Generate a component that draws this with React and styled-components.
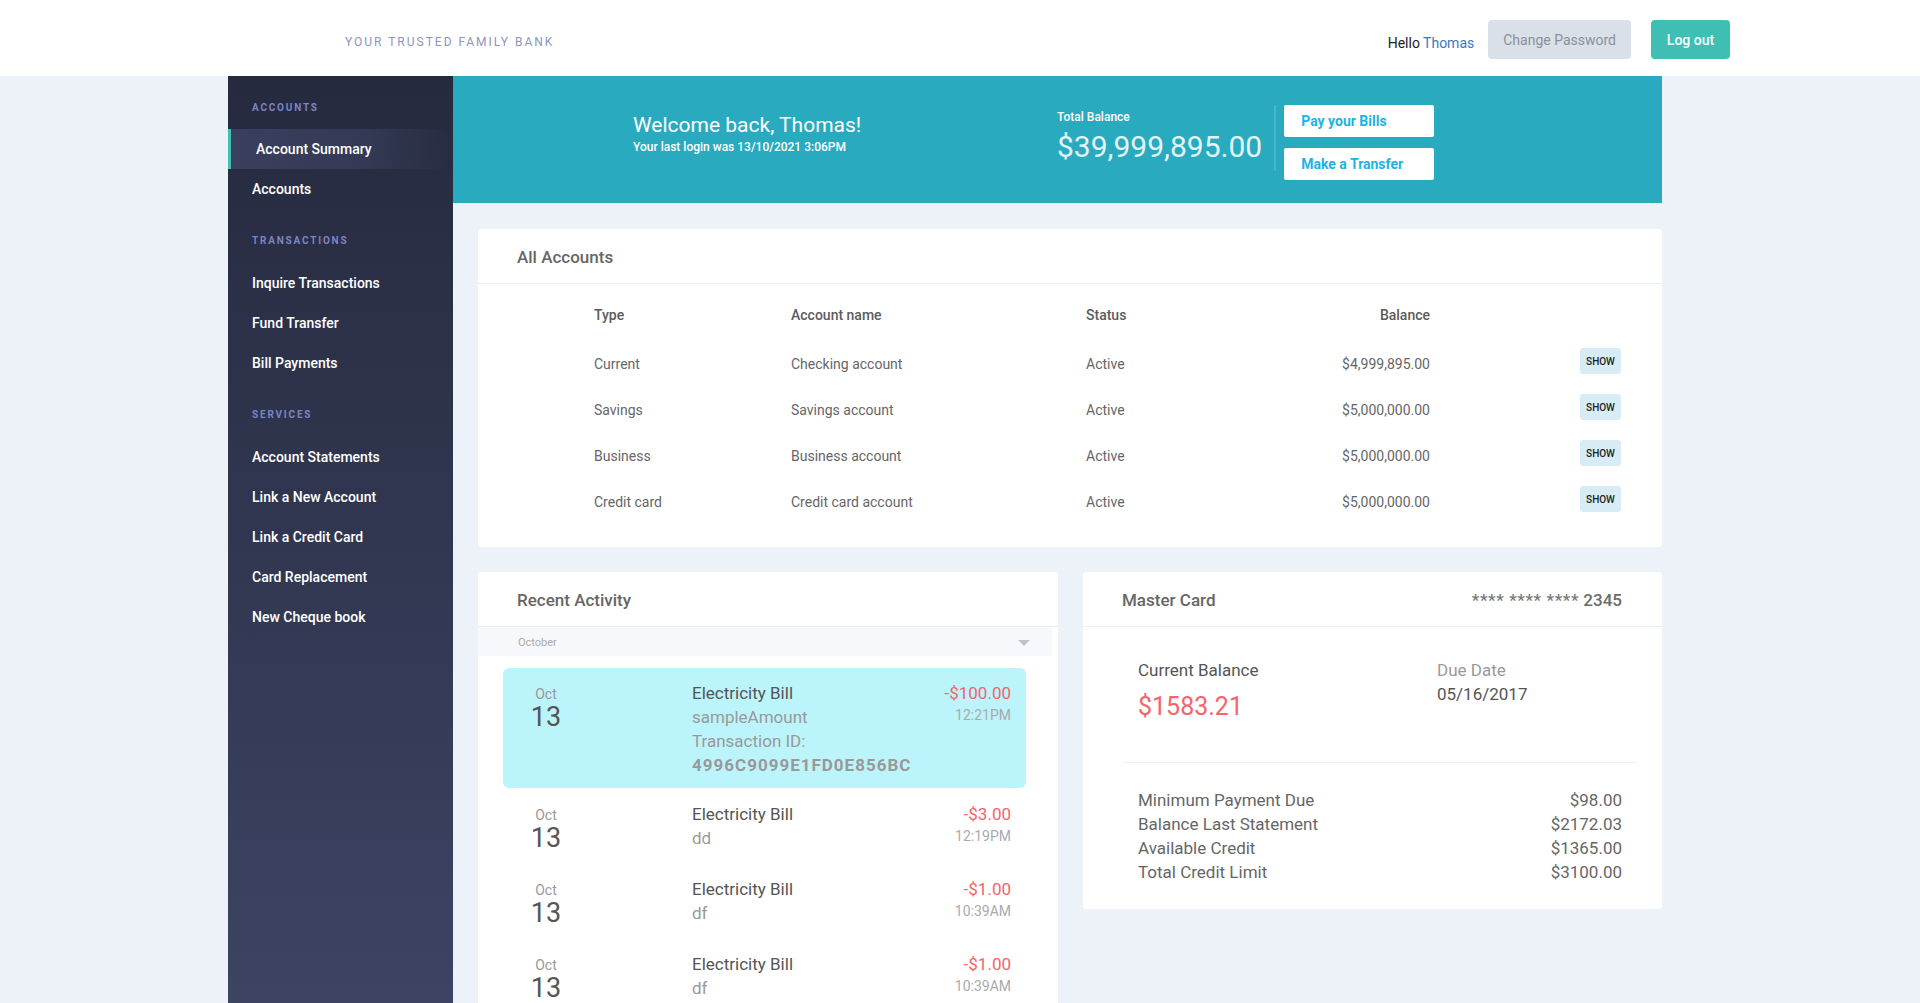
import React from "react";
import styled, { createGlobalStyle } from "styled-components";

const accounts = [
    { type: "Current", name: "Checking account", status: "Active", balance: "$4,999,895.00" },
    { type: "Savings", name: "Savings account", status: "Active", balance: "$5,000,000.00" },
    { type: "Business", name: "Business account", status: "Active", balance: "$5,000,000.00" },
    { type: "Credit card", name: "Credit card account", status: "Active", balance: "$5,000,000.00" },
];

const activity = [
    { title: "Electricity Bill", desc: "sampleAmount", txId: "4996C9099E1FD0E856BC", amount: "-$100.00", time: "12:21PM", active: true },
    { title: "Electricity Bill", desc: "dd", amount: "-$3.00", time: "12:19PM" },
    { title: "Electricity Bill", desc: "df", amount: "-$1.00", time: "10:39AM" },
    { title: "Electricity Bill", desc: "df", amount: "-$1.00", time: "10:39AM" },
    { title: "Electricity Bill", desc: "test", amount: "-$5.00", time: "9:12AM" },
];

const cardRows = [
    ["Minimum Payment Due", "$98.00"],
    ["Balance Last Statement", "$2172.03"],
    ["Available Credit", "$1365.00"],
    ["Total Credit Limit", "$3100.00"],
];

const menu = [
    { label: "ACCOUNTS", items: ["Account Summary", "Accounts"] },
    { label: "TRANSACTIONS", items: ["Inquire Transactions", "Fund Transfer", "Bill Payments"] },
    { label: "SERVICES", items: ["Account Statements", "Link a New Account", "Link a Credit Card", "Card Replacement", "New Cheque book"] },
];

function App() {
    return (
        <>
            <GlobalStyle />
            <TopBar>
                <Tagline>YOUR TRUSTED FAMILY BANK</Tagline>
                <UserArea>
                    <Hello>Hello <UserName>Thomas</UserName></Hello>
                    <GreyButton>Change Password</GreyButton>
                    <TealButton>Log out</TealButton>
                </UserArea>
            </TopBar>
            <Layout>
                <Sidebar>
                    {menu.map((section) => (
                        <NavSection key={section.label}>
                            <SectionLabel>{section.label}</SectionLabel>
                            {section.items.map((item) => (
                                <NavItem key={item} $active={item === "Account Summary"}>{item}</NavItem>
                            ))}
                        </NavSection>
                    ))}
                </Sidebar>
                <Main>
                    <Banner>
                        <Welcome>
                            <WelcomeTitle>Welcome back, Thomas!</WelcomeTitle>
                            <LastLogin>Your last login was 13/10/2021 3:06PM</LastLogin>
                        </Welcome>
                        <BalanceBlock>
                            <BalanceLabel>Total Balance</BalanceLabel>
                            <BalanceAmount>$39,999,895.00</BalanceAmount>
                        </BalanceBlock>
                        <BannerDivider />
                        <BannerActions>
                            <WhiteButton>Pay your Bills</WhiteButton>
                            <WhiteButton>Make a Transfer</WhiteButton>
                        </BannerActions>
                    </Banner>

                    <Cards>
                        <Card>
                            <CardHeader>
                                <CardTitle>All Accounts</CardTitle>
                            </CardHeader>
                            <Table>
                                <HeadCell>Type</HeadCell>
                                <HeadCell>Account name</HeadCell>
                                <HeadCell>Status</HeadCell>
                                <HeadCell $right>Balance</HeadCell>
                                <HeadCell />
                                {accounts.map((a) => (
                                    <React.Fragment key={a.type}>
                                        <Cell>{a.type}</Cell>
                                        <Cell>{a.name}</Cell>
                                        <Cell>{a.status}</Cell>
                                        <Cell $right>{a.balance}</Cell>
                                        <Cell $right><ShowButton>SHOW</ShowButton></Cell>
                                    </React.Fragment>
                                ))}
                            </Table>
                        </Card>

                        <BottomRow>
                            <Card>
                                <CardHeader>
                                    <CardTitle>Recent Activity</CardTitle>
                                </CardHeader>
                                <MonthBar>
                                    <MonthLabel>October</MonthLabel>
                                    <Caret />
                                </MonthBar>
                                <ActivityList>
                                    {activity.map((t, i) => (
                                        <ActivityItem key={i} $active={t.active}>
                                            <DateCol>
                                                <Month>Oct</Month>
                                                <Day>13</Day>
                                            </DateCol>
                                            <InfoCol>
                                                <TxTitle>{t.title}</TxTitle>
                                                <TxLine>{t.desc}</TxLine>
                                                {t.txId && <TxLine>Transaction ID:</TxLine>}
                                                {t.txId && <TxId>{t.txId}</TxId>}
                                            </InfoCol>
                                            <AmountCol>
                                                <Amount>{t.amount}</Amount>
                                                <Time>{t.time}</Time>
                                            </AmountCol>
                                        </ActivityItem>
                                    ))}
                                </ActivityList>
                            </Card>

                            <CardAuto>
                                <CardHeader>
                                    <CardTitle>Master Card</CardTitle>
                                    <CardNumber><Masked>**** **** ****</Masked> 2345</CardNumber>
                                </CardHeader>
                                <CardSummary>
                                    <div>
                                        <SummaryLabel>Current Balance</SummaryLabel>
                                        <RedAmount>$1583.21</RedAmount>
                                    </div>
                                    <div>
                                        <SummaryLabel $muted>Due Date</SummaryLabel>
                                        <SummaryLabel>05/16/2017</SummaryLabel>
                                    </div>
                                </CardSummary>
                                <CardDetails>
                                    {cardRows.map(([label, value]) => (
                                        <DetailRow key={label}>
                                            <span>{label}</span>
                                            <span>{value}</span>
                                        </DetailRow>
                                    ))}
                                </CardDetails>
                            </CardAuto>
                        </BottomRow>
                    </Cards>
                </Main>
            </Layout>
        </>
    );
}

const GlobalStyle = createGlobalStyle`
    body {
        margin: 0;
        background: #edf1f8;
        font-family: Roboto, "Liberation Sans", sans-serif;
    }
    * { box-sizing: border-box; }
`;

const TopBar = styled.header`
    height: 76px;
    background: #fff;
    display: flex;
    align-items: center;
    justify-content: space-between;
    padding: 0 190px 0 345px;
`;

const Tagline = styled.div`
    font-size: 12px;
    letter-spacing: 2px;
    color: #8a94c2;
    margin-top: 8px;
`;

const UserArea = styled.div`
    display: flex;
    align-items: center;
    margin-top: 3px;
`;

const Hello = styled.span`
    font-size: 14px;
    color: #222;
    margin-right: 14px;
    margin-top: 6px;
`;

const UserName = styled.span`
    color: #3a78bf;
`;

const GreyButton = styled.button`
    height: 39px;
    padding: 0 15px;
    border: none;
    border-radius: 4px;
    background: #dae0e8;
    color: #8a9099;
    font-family: inherit;
    font-size: 14px;
    margin-right: 20px;
`;

const TealButton = styled(GreyButton)`
    background: #3fbeb4;
    color: #fff;
    font-weight: 500;
    margin-right: 0;
    width: 79px;
`;

const Layout = styled.div`
    display: flex;
    padding-left: 228px;
    min-height: calc(100vh - 76px);
`;

const Sidebar = styled.nav`
    width: 225px;
    flex-shrink: 0;
    padding-top: 0.1px;
    background: linear-gradient(180deg, #252a3f 0px, #3d4462 930px);
`;

const SectionLabel = styled.div`
    font-size: 10px;
    font-weight: 700;
    letter-spacing: 1.8px;
    color: #7b84c2;
    line-height: 14px;
    padding-left: 24px;
    margin: 25px 0 15px;
`;

const NavSection = styled.div`
    &:first-child ${SectionLabel} {
        margin-bottom: 14px;
    }
`;

const NavItem = styled.div`
    height: 40px;
    display: flex;
    align-items: center;
    font-size: 14px;
    font-weight: 500;
    color: #fff;
    padding-left: ${(p) => (p.$active ? "25px" : "24px")};
    border-left: ${(p) => (p.$active ? "3px solid #3fc2b2" : "none")};
    background: ${(p) =>
        p.$active ? "linear-gradient(90deg, #3a3f5e 0%, #343955 60%, rgba(37,42,63,0) 100%)" : "transparent"};
`;

const Main = styled.main`
    width: 1209px;
    flex-shrink: 0;
`;

const Banner = styled.section`
    height: 127px;
    background: #29aabe;
    display: flex;
    align-items: center;
    padding-left: 180px;
    color: #fff;
`;

const Welcome = styled.div`
    width: 424px;
    margin-bottom: 13px;
`;

const WelcomeTitle = styled.div`
    font-size: 21px;
    line-height: 26px;
`;

const LastLogin = styled.div`
    font-size: 12px;
    font-weight: 500;
    line-height: 16px;
    margin-top: 1px;
`;

const BalanceBlock = styled.div`
    padding-right: 12px;
    margin-bottom: 4px;
`;

const BalanceLabel = styled.div`
    font-size: 12px;
    font-weight: 500;
    line-height: 14px;
`;

const BalanceAmount = styled.div`
    font-size: 30px;
    line-height: 36px;
    color: #e2f5f8;
    margin-top: 5px;
`;

const BannerDivider = styled.div`
    width: 2px;
    height: 66px;
    background: #47b6c8;
    margin-right: 8px;
    margin-bottom: 4px;
`;

const BannerActions = styled.div`
    display: flex;
    flex-direction: column;
    gap: 11px;
    margin-top: 5px;
`;

const WhiteButton = styled.button`
    width: 150px;
    height: 32px;
    background: #fff;
    border: none;
    border-radius: 2px;
    text-align: left;
    padding-left: 17px;
    font-family: inherit;
    font-size: 14px;
    font-weight: 700;
    color: #1db2e6;
`;

const Cards = styled.div`
    padding: 26px 0 0 25px;
    display: flex;
    flex-direction: column;
    gap: 25px;
`;

const Card = styled.div`
    background: #fff;
    border-radius: 3px;
`;

const CardAuto = styled(Card)`
    align-self: flex-start;
`;

const CardHeader = styled.div`
    height: 55px;
    border-bottom: 1px solid #eceef2;
    display: flex;
    align-items: center;
    justify-content: space-between;
    padding: 1px 40px 0 39px;
`;

const CardTitle = styled.h2`
    margin: 0;
    font-size: 17px;
    font-weight: 500;
    color: #666;
`;

const CardNumber = styled.span`
    font-size: 17px;
    font-weight: 500;
    color: #6b6b6b;
`;

const Masked = styled.span`
    letter-spacing: 0.6px;
    color: #777;
`;

const Table = styled.div`
    display: grid;
    grid-template-columns: 197px 295px 150px 194px 1fr;
    grid-template-rows: 52px repeat(4, 46px);
    padding: 5px 41px 22px 116px;
    align-items: center;
`;

const HeadCell = styled.div`
    font-size: 14px;
    font-weight: 500;
    color: #5c5c5c;
    text-align: ${(p) => (p.$right ? "right" : "left")};
`;

const Cell = styled.div`
    font-size: 14px;
    color: #666;
    text-align: ${(p) => (p.$right ? "right" : "left")};
`;

const ShowButton = styled.button`
    width: 41px;
    height: 26px;
    border: none;
    border-radius: 3px;
    background: #d8ecf5;
    color: #222;
    font-family: inherit;
    font-size: 10px;
    font-weight: 500;
    padding: 0;
    margin-bottom: 6px;
`;

const BottomRow = styled.div`
    display: grid;
    grid-template-columns: 580px 579px;
    gap: 25px;
`;

const MonthBar = styled.div`
    height: 29px;
    margin-right: 6px;
    background: #f7f8fc;
    display: flex;
    align-items: center;
    justify-content: space-between;
    padding: 2px 22px 0 40px;
`;

const MonthLabel = styled.span`
    font-size: 11px;
    color: #aaa;
`;

const Caret = styled.span`
    width: 0;
    height: 0;
    border-left: 6px solid transparent;
    border-right: 6px solid transparent;
    border-top: 6px solid #bfc2c8;
`;

const ActivityList = styled.div`
    padding: 12px 32px 20px 25px;
    display: flex;
    flex-direction: column;
    gap: 1px;
`;

const ActivityItem = styled.div`
    display: grid;
    grid-template-columns: 189px minmax(0, 1fr) auto;
    padding: 13px 15px 11px 0;
    border-radius: 6px;
    background: ${(p) => (p.$active ? "#bcf4fc" : "transparent")};
`;

const DateCol = styled.div`
    width: 86px;
    text-align: center;
    padding-top: 3px;
`;

const Month = styled.div`
    font-size: 14px;
    line-height: 20px;
    color: #999;
`;

const Day = styled.div`
    font-size: 27px;
    line-height: 27px;
    color: #555;
`;

const InfoCol = styled.div`
    display: flex;
    flex-direction: column;
`;

const TxTitle = styled.div`
    font-size: 17px;
    line-height: 24px;
    color: #555;
`;

const TxLine = styled.div`
    font-size: 17px;
    line-height: 24px;
    color: #999;
`;

const TxId = styled(TxLine)`
    font-weight: 700;
    letter-spacing: 1px;
`;

const AmountCol = styled.div`
    text-align: right;
`;

const Amount = styled.div`
    font-size: 17px;
    line-height: 24px;
    color: #f5636b;
`;

const Time = styled.div`
    font-size: 14px;
    line-height: 20px;
    color: #aaa;
`;

const CardSummary = styled.div`
    display: grid;
    grid-template-columns: 299px 1fr;
    margin: 0 25px 0 40px;
    padding: 31px 15px 40px;
    border-bottom: 1px solid #eceef2;
`;

const SummaryLabel = styled.div`
    font-size: 17px;
    line-height: 24px;
    color: ${(p) => (p.$muted ? "#999" : "#555")};
`;

const RedAmount = styled.div`
    font-size: 25px;
    line-height: 30px;
    margin-top: 10px;
    color: #f5636b;
`;

const CardDetails = styled.div`
    margin: 0 25px 0 40px;
    padding: 25px 15px 25px;
`;

const DetailRow = styled.div`
    display: flex;
    justify-content: space-between;
    font-size: 17px;
    line-height: 24px;
    color: #666;
`;

export default App;
